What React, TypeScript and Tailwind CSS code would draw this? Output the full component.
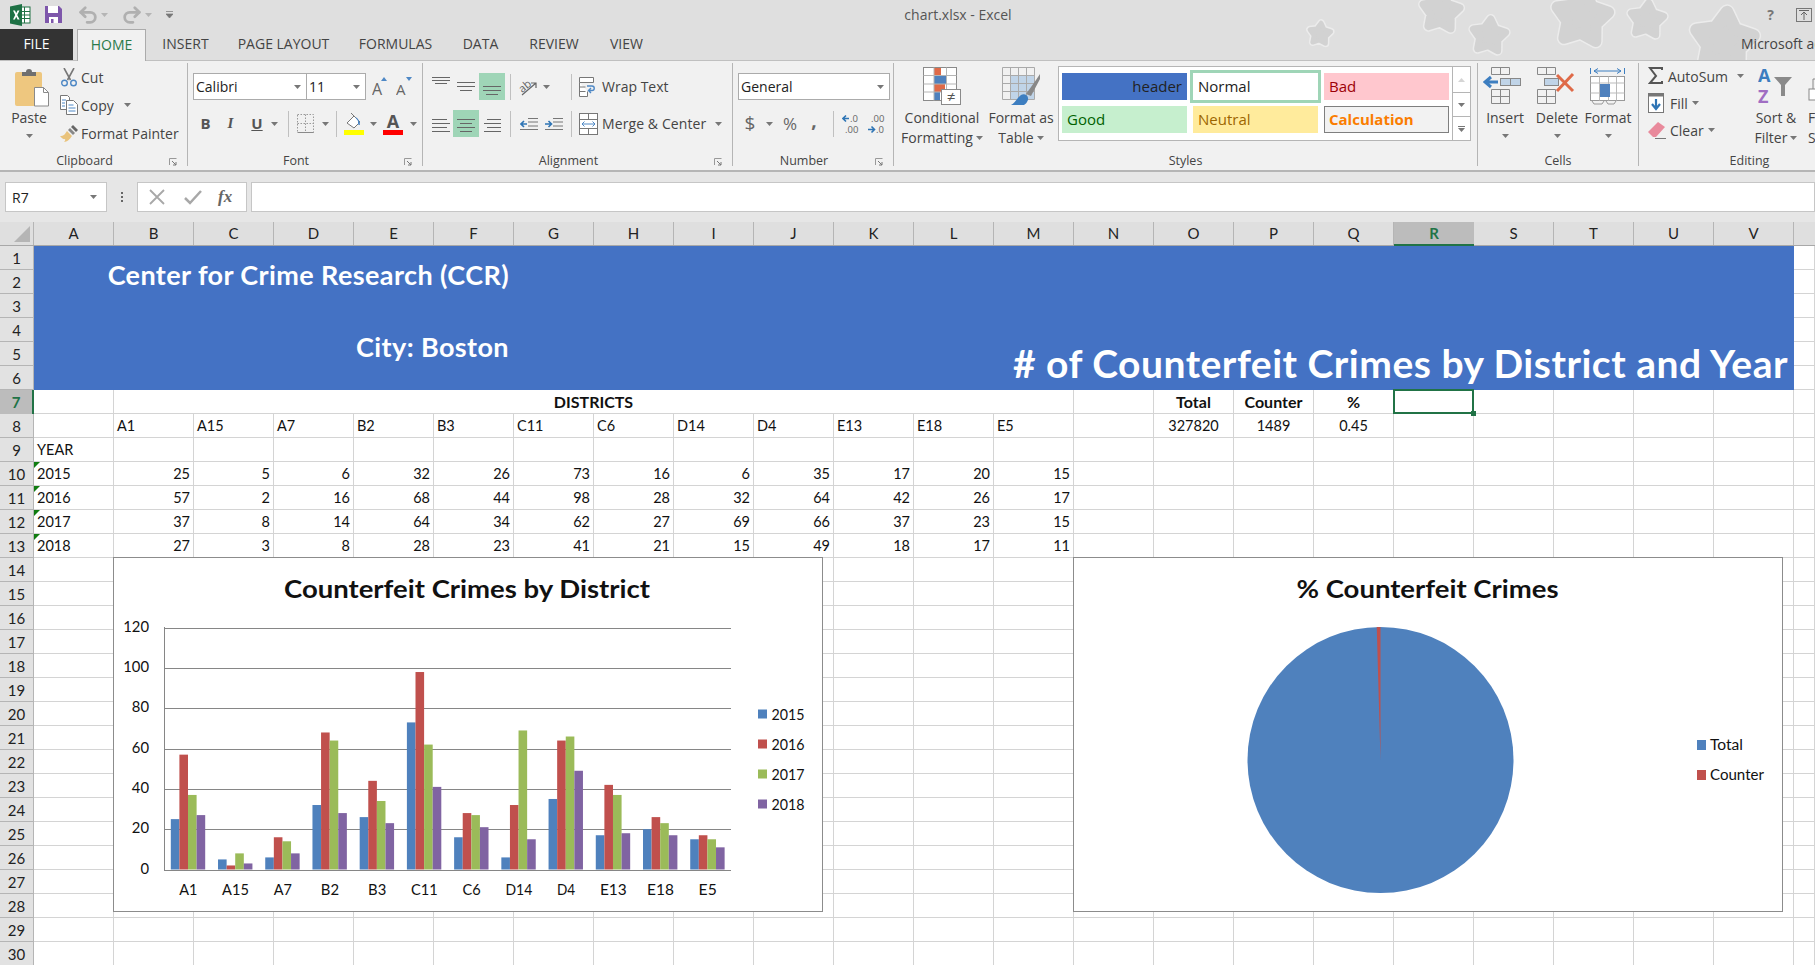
import React from "react";
import { Undo2, Redo2 } from "lucide-react";

const UI = "font-['Open_Sans','Noto_Sans',sans-serif]";
const SHEET = "font-['Lato','Carlito',sans-serif]";
const COLS = "ABCDEFGHIJKLMNOPQRSTUV".split("");
const SERIES = ["#4f81bd", "#c0504d", "#9bbb59", "#8064a2"];
const DISTRICTS = ["A1", "A15", "A7", "B2", "B3", "C11", "C6", "D14", "D4", "E13", "E18", "E5"];
const YEARS: [string, number[]][] = [
  ["2015", [25, 5, 6, 32, 26, 73, 16, 6, 35, 17, 20, 15]],
  ["2016", [57, 2, 16, 68, 44, 98, 28, 32, 64, 42, 26, 17]],
  ["2017", [37, 8, 14, 64, 34, 62, 27, 69, 66, 37, 23, 15]],
  ["2018", [27, 3, 8, 28, 23, 41, 21, 15, 49, 18, 17, 11]],
];

function Caret({ className = "" }: { className?: string }) {
  return (
    <svg width="7" height="4" viewBox="0 0 7 4" className={"shrink-0 " + className}>
      <path d="M0 0h7L3.5 4z" fill="#777" />
    </svg>
  );
}

function Launcher() {
  return (
    <svg width="8" height="8" viewBox="0 0 8 8">
      <path d="M0.5 7V0.5H7.5" fill="none" stroke="#999" />
      <path d="M3 3l4 4M7 4v3H4" fill="none" stroke="#777" />
    </svg>
  );
}

function Group({ w, label, launcher, children }: { w: string; label: string; launcher?: boolean; children: React.ReactNode }) {
  return (
    <div className={"mt-[2px] mb-[4px] shrink-0 border-r border-[#b5b5b5] flex flex-col " + w}>
      <div className="h-[90px] flex">{children}</div>
      <div className="h-[15px] flex leading-[20px] text-[12.5px] text-[#444]">
        <div className="flex-1 text-center">{label}</div>
        {launcher && <div className="w-[18px] pt-[7px]"><Launcher /></div>}
      </div>
    </div>
  );
}

function Big({ w, icon, l1, l2, caretInline }: { w: string; icon: React.ReactNode; l1: string; l2?: string; caretInline?: boolean }) {
  return (
    <div className={"flex flex-col items-center shrink-0 text-[14px] text-[#444] " + w}>
      <div className="h-[45px] pt-[4px] flex justify-center">{icon}</div>
      <div className="leading-[20px] whitespace-nowrap">{l1}</div>
      {l2 ? (
        <div className="leading-[20px] whitespace-nowrap flex items-center gap-[3px]">{l2}{caretInline && <Caret />}</div>
      ) : (
        <div className="h-[20px] flex items-start pt-[6px]"><Caret /></div>
      )}
    </div>
  );
}

function Sep({ className = "" }: { className?: string }) {
  return <div className={"w-px h-[26px] bg-[#c0c0c0] shrink-0 " + className} />;
}

function Lines({ rows, active }: { rows: [number, number, number][]; active?: boolean }) {
  return (
    <div className={"w-[26px] h-[27px] shrink-0 " + (active ? "bg-[#9fd5b7]" : "")}>
      <svg width="26" height="27" viewBox="0 0 26 27">
        {rows.map(([y, a, b], i) => (
          <line key={i} x1={a} x2={b} y1={y + 0.5} y2={y + 0.5} stroke="#666" />
        ))}
      </svg>
    </div>
  );
}

function Combo({ w, text }: { w: string; text: string }) {
  return (
    <div className={"h-[27px] bg-white border border-[#ababab] flex items-center justify-between pl-[2px] pr-[5px] text-[14px] text-[#222] shrink-0 " + w}>
      <span>{text}</span>
      <Caret />
    </div>
  );
}

function ExcelIcon() {
  return (
    <svg width="21" height="22" viewBox="0 0 21 22">
      <rect x="9" y="3" width="11" height="16" fill="#fff" stroke="#207245" />
      <path d="M9 7.5h11M9 11h11M9 14.5h11M14.5 3v16" stroke="#207245" />
      <path d="M0 2.5L12 0v22L0 19.5z" fill="#1e7145" />
      <path d="M3 6.5h2l1.2 2.8L7.5 6.5h2L7.2 11l2.4 4.5h-2L6.2 12.7 4.9 15.5H3L5.2 11z" fill="#fff" />
    </svg>
  );
}

function SaveIcon() {
  return (
    <svg width="17" height="17" viewBox="0 0 17 17">
      <path d="M0 0h14l3 3v14H0z" fill="#7e57ab" />
      <rect x="3" y="0" width="10" height="7" fill="#fff" />
      <rect x="4" y="11" width="9" height="6" fill="#fff" />
      <rect x="6" y="13" width="2.5" height="4" fill="#7e57ab" />
    </svg>
  );
}

function PasteIcon() {
  return (
    <svg width="36" height="40" viewBox="0 0 36 40" className="ml-[8px]">
      <rect x="0" y="5" width="27" height="34" rx="2" fill="#eec77f" />
      <path d="M7 9V5h4a3 3 0 016 0h4v4z" fill="#6f6f6f" />
      <path d="M19.5 20.5h9l5 5v13.5h-14z" fill="#fff" stroke="#8a8a8a" />
      <path d="M28.5 20.5v5h5" fill="none" stroke="#8a8a8a" />
    </svg>
  );
}

function CutIcon() {
  return (
    <svg width="16" height="19" viewBox="0 0 16 19">
      <path d="M3 0l6.5 12M13 0L6.5 12" stroke="#777" strokeWidth="1.6" fill="none" />
      <circle cx="3.5" cy="15" r="2.8" fill="none" stroke="#4e88c5" strokeWidth="1.4" />
      <circle cx="12.5" cy="15" r="2.8" fill="none" stroke="#4e88c5" strokeWidth="1.4" />
    </svg>
  );
}

function CopyIcon() {
  return (
    <svg width="18" height="20" viewBox="0 0 18 20">
      <path d="M.5.5h7l2 2v12H.5z" fill="#fff" stroke="#777" />
      <path d="M6.5 5.5h7l4 4v10h-11z" fill="#fff" stroke="#777" />
      <path d="M2 5h4M2 8h3M2 11h3M8.5 10h5M8.5 13h7M8.5 16h7" stroke="#4e88c5" />
    </svg>
  );
}

function BrushIcon() {
  return (
    <svg width="18" height="17" viewBox="0 0 18 17">
      <path d="M0 11c4 0 5-2 7-5l5 5c-2 3-5 6-8 6 1-1 1.500-2 1-3-1 .5-2.500 0-5-3z" fill="#e9c37c" />
      <path d="M8 5l2-2 5 5-2 2z" fill="#888" />
      <path d="M11 2l2-2 5 5-2 2z" fill="#666" />
    </svg>
  );
}

function GrowA({ dir }: { dir: "up" | "down" }) {
  return (
    <svg width="18" height="20" viewBox="0 0 18 20">
      <text x="0" y="18" fontFamily="Open Sans" fontSize={dir === "up" ? 16 : 15} fill="#666">A</text>
      <path d={dir === "up" ? "M9 4l3-4 3 4z" : "M10 0h6l-3 4z"} fill="#4e88c5" />
    </svg>
  );
}

function BordersIcon() {
  return (
    <svg width="17" height="19" viewBox="0 0 17 19">
      <path d="M.5.5h16v18H.5zM8.500 .5v18M.5 9.500h16" fill="none" stroke="#999" strokeDasharray="1.500 1.500" />
      <path d="M.5 18.500h16" fill="none" stroke="#8a8a8a" />
    </svg>
  );
}

function FillIcon() {
  return (
    <svg width="20" height="24" viewBox="0 0 20 24">
      <path d="M3 11l7-7 6 6-6 6z" fill="#fff" stroke="#777" />
      <path d="M7 1l3 3" stroke="#777" />
      <path d="M11 5c3 1 5 4 5 8l-2-.5V9z" fill="#4e88c5" />
      <rect x="0" y="18" width="20" height="5" fill="#ffff00" />
    </svg>
  );
}

function FontColorIcon() {
  return (
    <svg width="20" height="24" viewBox="0 0 20 24">
      <text x="10" y="16" textAnchor="middle" fontFamily="Open Sans" fontWeight="700" fontSize="18" fill="#555">A</text>
      <rect x="0" y="18" width="20" height="5" fill="#ff0000" />
    </svg>
  );
}

function OrientIcon() {
  return (
    <svg width="20" height="20" viewBox="0 0 20 20">
      <text x="0" y="13" fontFamily="Open Sans" fontSize="11" fill="#666" transform="rotate(-40 6 10)">ab</text>
      <path d="M3 18L17 6M12 6h5v5" fill="none" stroke="#666" strokeWidth="1.2" />
    </svg>
  );
}

function WrapIcon() {
  return (
    <svg width="18" height="20" viewBox="0 0 18 20">
      <path d="M.5.5h14v5H.5zM.5 5.500v14h8v-5" fill="#fff" stroke="#777" />
      <path d="M.5 10h6M.5 14.500h6" stroke="#777" />
      <path d="M8 9h5c3 0 3 4.500 0 4.500H10M12 11l-2.500 2.500L12 16" fill="none" stroke="#4e88c5" strokeWidth="1.4" />
    </svg>
  );
}

function MergeIcon() {
  return (
    <svg width="19" height="22" viewBox="0 0 19 22">
      <rect x=".5" y=".5" width="18" height="21" fill="#fff" stroke="#777" />
      <path d="M.5 6.500h18M.5 15.500h18M9.500.5v6M9.500 15.500v6" stroke="#777" />
      <path d="M3 11h13M5.500 8.500L3 11l2.500 2.500M13.500 8.500L16 11l-2.500 2.500" fill="none" stroke="#4e88c5" />
    </svg>
  );
}

function IndentIcon({ flip }: { flip?: boolean }) {
  return (
    <svg width="18" height="12" viewBox="0 0 18 12">
      <path d="M8 .5h10M8 4h10M8 8h10M0 11.500h18" stroke="#777" />
      {flip ? (
        <path d="M0 6h6M3.500 3L6.500 6l-3 3" fill="none" stroke="#2f75b5" strokeWidth="1.6" />
      ) : (
        <path d="M7 6H1M4 3L1 6l3 3" fill="none" stroke="#2f75b5" strokeWidth="1.6" />
      )}
    </svg>
  );
}

function DecIcon({ inc }: { inc?: boolean }) {
  return (
    <svg width="18" height="20" viewBox="0 0 18 20" fontFamily="Open Sans" fontSize="9.500" fill="#666">
      {inc ? (
        <>
          <text x="3" y="8">.00</text>
          <text x="8" y="19">.0</text>
          <path d="M0 15.500h6M3.500 12.500l3 3-3 3" fill="none" stroke="#2f75b5" strokeWidth="1.6" />
        </>
      ) : (
        <>
          <text x="8" y="8">.0</text>
          <text x="3" y="19">.00</text>
          <path d="M7 4.500H1M4 1.500l-3 3 3 3" fill="none" stroke="#2f75b5" strokeWidth="1.6" />
        </>
      )}
    </svg>
  );
}

function CondIcon() {
  return (
    <svg width="38" height="38" viewBox="0 0 38 38">
      <rect x=".5" y=".5" width="33" height="33" fill="#fff" stroke="#8a8a8a" />
      <rect x="11" y="1" width="7" height="8" fill="#df6a48" />
      <rect x="11" y="9" width="12" height="8" fill="#4f81bd" />
      <rect x="11" y="17" width="11" height="8" fill="#df6a48" />
      <rect x="11" y="25" width="6" height="8" fill="#4f81bd" />
      <path d="M11 .5v33M23.500 .5v33M.5 8.500h33M.5 17h33M.5 25h33" stroke="#b5b5b5" />
      <rect x="18.500" y="22.500" width="19" height="15" fill="#fff" stroke="#8a8a8a" />
      <text x="28" y="35" textAnchor="middle" fontSize="15" fontFamily="Open Sans" fill="#555">≠</text>
    </svg>
  );
}

function TableIcon() {
  return (
    <svg width="38" height="38" viewBox="0 0 38 38">
      <rect x="8" y="8" width="24" height="24" fill="#c0d4e8" />
      <path d="M.5.5h32v32H.5zM8.500.5v32M16.500.5v32M24.500.5v32M.5 8.500h32M.5 16.500h32M.5 24.500h32" fill="none" stroke="#aaa" />
      <path d="M24 27l10-14 4-6v5l-9 17z" fill="#888" />
      <path d="M9 38c4-2 6-7 10-10 3-2 8 0 7 5-1 2-2 4-4 5z" fill="#3d7ec0" />
    </svg>
  );
}

function InsertIcon() {
  return (
    <svg width="44" height="38" viewBox="0 0 44 38">
      <path d="M8.500.5h18v7h-18zM17.500.5v7M8.500 22.500h18v14h-18zM17.500 22.500v14M8.500 29.500h18" fill="none" stroke="#888" />
      <rect x="17.500" y="11.500" width="20" height="7" fill="#c0d4e8" stroke="#888" />
      <path d="M27.500 11.500v7" stroke="#888" />
      <path d="M15 15H2M8 10l-6 5 6 5" fill="none" stroke="#3d7ec0" strokeWidth="3" />
    </svg>
  );
}

function DeleteIcon() {
  return (
    <svg width="40" height="38" viewBox="0 0 40 38">
      <path d="M.5.5h18v7h-18zM9.500.5v7M.5 22.500h18v14h-18zM9.500 22.500v14M.5 29.500h18" fill="none" stroke="#888" />
      <rect x="7.500" y="11.500" width="14" height="7" fill="#c0d4e8" stroke="#888" />
      <path d="M20 8l16 16M36 7L20 24" stroke="#df6a48" strokeWidth="3" />
    </svg>
  );
}

function FormatIcon() {
  return (
    <svg width="36" height="38" viewBox="0 0 36 38">
      <path d="M.5 1v6M34.500 1v6M4 4h27M8 1.500L4 4l4 2.500M27 1.500L31 4l-4 2.500" fill="none" stroke="#3d7ec0" />
      <rect x=".5" y="9.500" width="34" height="24" fill="#fff" stroke="#999" />
      <path d="M9.500 9.500v24M18.500 9.500v24M26.500 9.500v24M.5 16h34M.5 26h34" stroke="#bbb" />
      <rect x="10" y="17" width="10" height="13" fill="#4f81bd" />
      <path d="M2 34l2 3h8l2-3M16 34l2 3h6l2-3" fill="none" stroke="#999" />
    </svg>
  );
}

function SigmaIcon() {
  return (
    <svg width="15" height="18" viewBox="0 0 15 18">
      <path d="M14 3V1H2l6 8-6 7h12v-2" fill="none" stroke="#555" strokeWidth="2" />
    </svg>
  );
}

function FillDownIcon() {
  return (
    <svg width="17" height="20" viewBox="0 0 17 20">
      <rect x=".5" y=".5" width="15" height="19" fill="#fff" stroke="#777" />
      <rect x=".5" y=".5" width="15" height="3" fill="#777" />
      <path d="M8 6v10M4 11l4 5 4-5" fill="none" stroke="#2f75b5" strokeWidth="2.200" />
    </svg>
  );
}

function EraserIcon() {
  return (
    <svg width="18" height="18" viewBox="0 0 18 18">
      <path d="M0 11L10 1l7 5-9 10H5z" fill="#e98a9c" />
      <path d="M7 17.500h11" stroke="#777" />
    </svg>
  );
}

function SortIcon() {
  return (
    <svg width="36" height="38" viewBox="0 0 36 38" fontFamily="Open Sans" fontWeight="700">
      <text x="0" y="15" fontSize="18" fill="#3d7ec0">A</text>
      <text x="0" y="36" fontSize="18" fill="#a06ec2">Z</text>
      <path d="M16 10h18l-7 8v11h-4V18z" fill="#8a8a8a" />
    </svg>
  );
}

function FindFragment() {
  return (
    <svg width="10" height="36" viewBox="0 0 10 36">
      <path d="M5 20V10h5v10" fill="none" stroke="#888" />
      <rect x="1" y="20" width="9" height="11" fill="#fff" stroke="#888" />
    </svg>
  );
}

function starPath(cx: number, cy: number, r: number) {
  const pts: string[] = [];
  for (let i = 0; i < 10; i++) {
    const rr = i % 2 === 0 ? r : r * 0.56;
    const a = -Math.PI / 2 + (i * Math.PI) / 5 + 0.1;
    pts.push(`${cx + rr * Math.cos(a)},${cy + rr * Math.sin(a)}`);
  }
  return pts.join(" ");
}

function Stars() {
  const stars: [number, number, number][] = [
    [1320, 34, 11], [1441, 12, 19], [1489, 36, 17], [1582, 18, 27], [1647, 20, 17], [1724, 42, 30],
  ];
  return (
    <svg className="absolute inset-0" width="1815" height="60" viewBox="0 0 1815 60">
      {stars.map(([x, y, r], i) => (
        <g key={i} strokeLinejoin="round">
          <polygon points={starPath(x, y, r)} fill="#ececec" stroke="#ececec" strokeWidth={r * 0.42 + 3} />
          <polygon points={starPath(x, y, r)} fill="#d2d2d2" stroke="#d2d2d2" strokeWidth={r * 0.42} />
        </g>
      ))}
    </svg>
  );
}

function TitleAndTabs() {
  const tabs: [string, string][] = [
    ["INSERT", "w-[47px]"], ["PAGE LAYOUT", "w-[91px]"], ["FORMULAS", "w-[75px]"],
    ["DATA", "w-[37px]"], ["REVIEW", "w-[52px]"], ["VIEW", "w-[35px]"],
  ];
  return (
    <div className="relative bg-[#dfdfdf] h-[60px] shrink-0">
      <Stars />
      <div className="relative h-[29px] flex items-center">
        <div className="w-[880px] shrink-0 flex items-center pl-[10px]">
          <ExcelIcon />
          <div className="ml-[14px]"><SaveIcon /></div>
          <Undo2 size={22} strokeWidth={3} color="#b0b0b0" className="ml-[15px]" />
          <Caret className="ml-[2px] opacity-40" />
          <Redo2 size={22} strokeWidth={3} color="#b0b0b0" className="ml-[13px]" />
          <Caret className="ml-[2px] opacity-40" />
          <svg width="7" height="7" viewBox="0 0 7 7" className="ml-[14px]">
            <path d="M0 .5h7M0 3h7L3.500 7z" stroke="#777" fill="#777" strokeWidth=".7" />
          </svg>
        </div>
        <div className="w-[156px] text-center text-[14px] text-[#555] pb-[1px] whitespace-nowrap">chart.xlsx - Excel</div>
        <div className="ml-auto flex items-center">
          <span className="text-[14px] font-bold text-[#777] mr-[22px]">?</span>
          <svg width="16" height="14" viewBox="0 0 16 14" className="mr-[3px]">
            <rect x=".5" y=".5" width="15" height="13" fill="none" stroke="#777" />
            <path d="M3 2.500h10M8 12V4M5 7l3-3 3 3" fill="none" stroke="#666" />
          </svg>
        </div>
      </div>
      <div className="relative h-[31px] flex items-stretch text-[14px] text-[#444] whitespace-nowrap">
        <div className="w-[73px] bg-[#333] text-white flex items-center justify-center pb-[2px]">FILE</div>
        <div className="ml-[4px] w-[69px] h-[32px] bg-[#f1f1f1] border border-b-0 border-[#ababab] text-[#2a7a4b] flex items-center justify-center pb-[3px] z-10">HOME</div>
        <div className="ml-[16px] flex items-center gap-[29px] pb-[2px]">
          {tabs.map(([t, w]) => (
            <div key={t} className={"text-center flex justify-center " + w}>{t}</div>
          ))}
        </div>
        <div className="ml-auto w-[74px] overflow-hidden flex items-center pb-[2px]">Microsoft account</div>
      </div>
    </div>
  );
}

function Ribbon() {
  const small = "flex items-center h-[26px] text-[14px] text-[#444] whitespace-nowrap";
  return (
    <div className="h-[112px] shrink-0 bg-[#f1f1f1] border-t border-b-2 border-[#b5b5b5] border-t-[#c0c0c0] flex overflow-hidden">
      <Group w="w-[188px]" label="Clipboard" launcher>
        <Big w="w-[58px]" icon={<PasteIcon />} l1="Paste" />
        <div className="flex flex-col gap-[2px] pt-[1px]">
          <div className={small}><div className="w-[22px] flex justify-center"><CutIcon /></div><span className="ml-[1px]">Cut</span></div>
          <div className={small}><div className="w-[22px] flex justify-center"><CopyIcon /></div><span className="ml-[1px]">Copy</span><Caret className="ml-[10px]" /></div>
          <div className={small}><div className="w-[22px] flex justify-center"><BrushIcon /></div><span className="ml-[1px]">Format Painter</span></div>
        </div>
      </Group>
      <Group w="w-[235px]" label="Font" launcher>
        <div className="flex flex-col pt-[10px] gap-[10px] text-[#555]">
          <div className="flex items-center pl-[5px]">
            <Combo w="w-[114px]" text="Calibri" />
            <Combo w="w-[60px] -ml-px" text="11" />
            <div className="w-[24px] ml-[3px] flex justify-center"><GrowA dir="up" /></div>
            <div className="w-[24px] flex justify-center"><GrowA dir="down" /></div>
          </div>
          <div className="flex items-center h-[27px] pl-[5px]">
            <div className="w-[25px] text-center font-bold text-[15px]">B</div>
            <div className="w-[25px] text-center italic font-semibold text-[15px] font-['Liberation_Serif',serif]">I</div>
            <div className="w-[28px] text-center font-bold text-[15px] underline">U</div>
            <div className="w-[11px]"><Caret /></div>
            <Sep className="ml-[6px]" />
            <div className="w-[24px] ml-[4px] flex justify-center"><BordersIcon /></div>
            <div className="w-[16px] flex justify-center"><Caret /></div>
            <Sep className="ml-[3px]" />
            <div className="ml-[7px]"><FillIcon /></div>
            <div className="w-[18px] flex justify-center"><Caret /></div>
            <div className="ml-[1px]"><FontColorIcon /></div>
            <div className="w-[20px] flex justify-center"><Caret /></div>
          </div>
        </div>
      </Group>
      <Group w="w-[310px]" label="Alignment" launcher>
        <div className="flex flex-col pt-[10px] gap-[10px] pl-[4px]">
          <div className="flex items-center h-[27px]">
            <Lines rows={[[4, 5, 23], [7, 5, 23], [10, 8, 20]]} />
            <Lines rows={[[9, 4, 22], [13, 4, 22], [17, 7, 19]]} />
            <Lines active rows={[[13, 4, 22], [17, 4, 22], [21, 7, 19]]} />
            <Sep className="ml-[5px]" />
            <div className="w-[60px] pl-[8px] flex items-center gap-[4px]"><OrientIcon /><Caret /></div>
            <Sep />
            <div className="ml-[7px]"><WrapIcon /></div>
            <span className="ml-[5px] text-[14px] text-[#444] whitespace-nowrap">Wrap Text</span>
          </div>
          <div className="flex items-center h-[27px]">
            <Lines rows={[[9, 5, 20], [13, 5, 23], [17, 5, 20], [21, 5, 23]]} />
            <Lines active rows={[[9, 4, 22], [13, 7, 19], [17, 4, 22], [21, 7, 19]]} />
            <Lines rows={[[9, 8, 22], [13, 5, 22], [17, 8, 22], [21, 5, 22]]} />
            <Sep className="ml-[5px]" />
            <div className="w-[60px] pl-[9px] flex items-center gap-[7px]"><IndentIcon /><IndentIcon flip /></div>
            <Sep />
            <div className="ml-[7px]"><MergeIcon /></div>
            <span className="ml-[4px] text-[14px] tracking-[0.1px] text-[#444] whitespace-nowrap">Merge &amp; Center</span>
            <Caret className="ml-[9px]" />
          </div>
        </div>
      </Group>
      <Group w="w-[161px]" label="Number" launcher>
        <div className="flex flex-col pt-[10px] gap-[10px] pl-[5px]">
          <Combo w="w-[152px]" text="General" />
          <div className="flex items-center h-[27px] text-[#666]">
            <div className="w-[22px] ml-[1px] text-center text-[19px] leading-none">$</div>
            <div className="w-[16px] flex justify-center"><Caret /></div>
            <div className="w-[26px] text-center text-[17px] leading-none">%</div>
            <div className="w-[24px] text-center text-[19px] leading-none font-bold pb-[6px] pr-[2px]">,</div>
            <Sep className="ml-[6px]" />
            <div className="w-[24px] ml-[5px] flex justify-center"><DecIcon /></div>
            <div className="w-[24px] ml-[2px] flex justify-center"><DecIcon inc /></div>
          </div>
        </div>
      </Group>
      <Group w="w-[584px]" label="Styles">
        <Big w="w-[96px]" icon={<CondIcon />} l1="Conditional" l2="Formatting" caretInline />
        <Big w="w-[62px]" icon={<TableIcon />} l1="Format as" l2="Table" caretInline />
        <div className="ml-[6px] mt-[3px] w-[413px] h-[75px] bg-white border border-[#b5b5b5] flex">
          <div className="grid grid-cols-[125px_125px_125px] grid-rows-[27px_27px] gap-x-[6px] gap-y-[6px] pl-[3px] pt-[6px] text-[15px] flex-1">
            <div className="bg-[#4472c4] text-[#222] text-right pr-[5px] leading-[27px]">header</div>
            <div className="bg-white text-[#222] pl-[5px] leading-[27px] outline-3 outline-[#9fd5b7]">Normal</div>
            <div className="bg-[#ffc7ce] text-[#9c0006] pl-[5px] leading-[27px]">Bad</div>
            <div className="bg-[#c6efce] text-[#006100] pl-[5px] leading-[27px]">Good</div>
            <div className="bg-[#ffeb9c] text-[#9c6500] pl-[5px] leading-[27px]">Neutral</div>
            <div className="bg-[#f2f2f2] border border-[#7f7f7f] text-[#fa7d00] font-bold pl-[4px] leading-[25px]">Calculation</div>
          </div>
          <div className="w-[18px] border-l border-[#b5b5b5] flex flex-col">
            <div className="h-[26px] border-b border-[#b5b5b5] flex items-center justify-center"><Caret className="rotate-180 opacity-30" /></div>
            <div className="h-[24px] border-b border-[#b5b5b5] flex items-center justify-center"><Caret /></div>
            <div className="flex-1 flex flex-col items-center justify-center gap-[1px]"><div className="w-[7px] h-px bg-[#777]" /><Caret /></div>
          </div>
        </div>
      </Group>
      <Group w="w-[161px]" label="Cells">
        <Big w="w-[54px]" icon={<InsertIcon />} l1="Insert" />
        <Big w="w-[50px]" icon={<DeleteIcon />} l1="Delete" />
        <Big w="w-[52px]" icon={<FormatIcon />} l1="Format" />
      </Group>
      <Group w="w-[222px]" label="Editing">
        <div className="ml-[9px] w-[96px] shrink-0 flex flex-col gap-[1px]">
          <div className={small}><div className="w-[22px]"><SigmaIcon /></div>AutoSum<Caret className="ml-[9px]" /></div>
          <div className={small}><div className="w-[22px]"><FillDownIcon /></div>Fill<Caret className="ml-[4px]" /></div>
          <div className={small}><div className="w-[22px]"><EraserIcon /></div>Clear<Caret className="ml-[4px]" /></div>
        </div>
        <Big w="w-[64px]" icon={<SortIcon />} l1="Sort &" l2="Filter" caretInline />
        <div className="flex flex-col text-[14px] text-[#444] whitespace-nowrap">
          <div className="h-[45px] pt-[6px]"><FindFragment /></div>
          <div className="leading-[20px]">Find &amp;</div>
          <div className="leading-[20px]">Select</div>
        </div>
      </Group>
    </div>
  );
}

function FormulaBar() {
  return (
    <div className="h-[50px] shrink-0 bg-[#e6e6e6] pt-[10px] pb-[10px] flex">
      <div className="ml-[5px] w-[102px] bg-white border border-[#c6c6c6] flex items-center justify-between pl-[6px] pr-[9px] text-[14px] text-[#222]">
        <span>R7</span><Caret />
      </div>
      <div className="w-[30px] flex flex-col items-center justify-center gap-[2px]">
        <div className="w-[2px] h-[2px] bg-[#666]" /><div className="w-[2px] h-[2px] bg-[#666]" /><div className="w-[2px] h-[2px] bg-[#666]" />
      </div>
      <div className="w-[110px] bg-white border border-[#c6c6c6] flex items-center text-[#999]">
        <svg width="16" height="16" viewBox="0 0 16 16" className="ml-[11px]"><path d="M1 1l14 14M15 1L1 15" stroke="#a8a8a8" strokeWidth="1.800" /></svg>
        <svg width="18" height="16" viewBox="0 0 18 16" className="ml-[19px]"><path d="M1 9l5 5L17 2" fill="none" stroke="#a8a8a8" strokeWidth="2.500" /></svg>
        <span className="ml-[16px] font-['Liberation_Serif',serif] italic font-bold text-[17px] text-[#666]">fx</span>
      </div>
      <div className="ml-[4px] flex-1 bg-white border border-[#c6c6c6]" />
    </div>
  );
}

function ColumnHeader() {
  return (
    <div className={"h-[24px] shrink-0 flex bg-[#dfdfdf] border-b border-[#a8a8a8] text-[15px] text-[#222] " + SHEET}>
      <div className="w-[34px] shrink-0 border-r border-[#b5b5b5] flex items-end justify-end pr-[3px] pb-[3px]">
        <svg width="16" height="16" viewBox="0 0 16 16"><path d="M16 0v16H0z" fill="#b5b5b5" /></svg>
      </div>
      {COLS.map((c) =>
        c === "R" ? (
          <div key={c} className="w-[80px] shrink-0 bg-[#bcbcbc] border-b-2 border-[#217346] -mb-px flex items-center justify-center font-bold text-[#217346]">{c}</div>
        ) : (
          <div key={c} className="w-[80px] shrink-0 border-r border-[#b5b5b5] flex items-center justify-center">{c}</div>
        )
      )}
    </div>
  );
}

function RowHeaders() {
  return (
    <div className={"w-[34px] shrink-0 flex flex-col bg-[#e2e2e2] text-[15px] text-[#222] " + SHEET}>
      {Array.from({ length: 30 }, (_, i) => i + 1).map((n) =>
        n === 7 ? (
          <div key={n} className="h-[24px] shrink-0 bg-[#bcbcbc] border-r-2 border-[#217346] flex items-center justify-center pt-[1px] font-bold text-[#217346]">{n}</div>
        ) : (
          <div key={n} className="h-[24px] shrink-0 border-r border-b border-[#b5b5b5] flex items-center justify-center pt-[1px]">{n}</div>
        )
      )}
    </div>
  );
}

const cell = "border-r border-b border-[#d4d4d4] flex items-center leading-none whitespace-nowrap pt-[2px] relative";
const boldCell = "border-r border-b border-[#d4d4d4] flex items-center justify-center leading-none whitespace-nowrap pt-[1px] relative font-bold text-[16px]";

function cellContent(row: number, c: number): { text?: string; align?: string; flag?: boolean } {
  if (row === 8) {
    if (c >= 1 && c <= 12) return { text: DISTRICTS[c - 1], align: "justify-start pl-[3px]" };
    if (c === 14) return { text: "327820", align: "justify-center" };
    if (c === 15) return { text: "1489", align: "justify-center" };
    if (c === 16) return { text: "0.45", align: "justify-center" };
  }
  if (row === 9 && c === 0) return { text: "YEAR", align: "justify-start pl-[3px]" };
  if (row >= 10 && row <= 13) {
    const [y, vals] = YEARS[row - 10];
    if (c === 0) return { text: y, align: "justify-start pl-[3px]", flag: true };
    if (c >= 1 && c <= 12) return { text: String(vals[c - 1]), align: "justify-end pr-[3px]" };
  }
  return {};
}

function ColumnChart() {
  const y0 = 869.5;
  const unit = 40.3 / 20;
  const step = 47.22;
  const lbl = (s: string) => s.length * 8.6;
  return (
    <svg width="708" height="353" viewBox="114 558 708 353" fontFamily="Lato, sans-serif" fill="#111">
      <text x="467" y="598" textAnchor="middle" fontWeight="700" fontSize="25" textLength="366" lengthAdjust="spacingAndGlyphs">Counterfeit Crimes by District</text>
      {[0, 20, 40, 60, 80, 100, 120].map((v) => {
        const y = Math.round(y0 - v * unit) + 0.5;
        return (
          <g key={v}>
            <line x1="164" x2="731" y1={y} y2={y} stroke="#868686" />
            <text x="149" y={y + 3.5} textAnchor="end" fontSize="15.500" textLength={lbl(String(v))} lengthAdjust="spacingAndGlyphs">{v}</text>
          </g>
        );
      })}
      <line x1="164.5" x2="164.5" y1="627" y2="870" stroke="#868686" />
      {DISTRICTS.map((d, i) => (
        <g key={d}>
          {YEARS.map(([yr, vals], s) => (
            <rect key={yr} x={170.8 + i * step + s * 8.6} width="8.6" y={y0 - vals[i] * unit} height={vals[i] * unit} fill={SERIES[s]} />
          ))}
          <text x={188.3 + i * step} y="895" textAnchor="middle" fontSize="15.500" textLength={lbl(d) + 1} lengthAdjust="spacingAndGlyphs">{d}</text>
        </g>
      ))}
      {YEARS.map(([yr], s) => (
        <g key={yr}>
          <rect x="758" y={709.5 + s * 30} width="9" height="9" fill={SERIES[s]} />
          <text x="771.5" y={719.5 + s * 30} fontSize="15.500" textLength="33" lengthAdjust="spacingAndGlyphs">{yr}</text>
        </g>
      ))}
    </svg>
  );
}

function PieChart() {
  const cx = 1380.5, cy = 760, r = 133;
  const a = (0.0045 * 2 * Math.PI);
  const sx = cx - r * Math.sin(a), sy = cy - r * Math.cos(a);
  return (
    <svg width="708" height="353" viewBox="1074 558 708 353" fontFamily="Lato, sans-serif" fill="#111">
      <text x="1427.5" y="598" textAnchor="middle" fontWeight="700" fontSize="25" textLength="262" lengthAdjust="spacingAndGlyphs">% Counterfeit Crimes</text>
      <circle cx={cx} cy={cy} r={r} fill="#4f81bd" />
      <path d={`M${cx} ${cy}L${sx} ${sy}A${r} ${r} 0 0 1 ${cx} ${cy - r}Z`} fill="#c0504d" />
      <rect x="1697" y="740" width="9" height="10" fill="#4f81bd" />
      <text x="1710" y="749.500" fontSize="15.500" textLength="33" lengthAdjust="spacingAndGlyphs">Total</text>
      <rect x="1697" y="770" width="9" height="10" fill="#c0504d" />
      <text x="1710" y="779.500" fontSize="15.500" textLength="54" lengthAdjust="spacingAndGlyphs">Counter</text>
    </svg>
  );
}

function Sheet() {
  return (
    <div className="flex-1 flex min-h-0 bg-white">
      <RowHeaders />
      <div className={"relative grid grid-cols-[repeat(22,80px)_21px] grid-rows-[repeat(30,24px)] text-[14.500px] text-[#111] " + SHEET}>
        <div className="col-span-22 row-span-6 bg-[#4472c4] text-white font-bold flex justify-between">
          <div className="w-[475px] flex flex-col items-end pt-[12px] gap-[38px] text-[27px] tracking-[0.4px] leading-[34px] whitespace-nowrap">
            <div>Center for Crime Research (CCR)</div>
            <div>City: Boston</div>
          </div>
          <div className="self-end pr-[6px] pb-[4px] text-[39px] tracking-[0.5px] leading-[46px] whitespace-nowrap">
            # of Counterfeit Crimes by District and Year
          </div>
        </div>
        {[1, 2, 3, 4, 5, 6].map((n) => (
          <div key={n} className={cell} />
        ))}
        <div className={cell} />
        <div className={"col-span-12 " + boldCell}>DISTRICTS</div>
        <div className={cell} />
        <div className={boldCell}>Total</div>
        <div className={boldCell}>Counter</div>
        <div className={boldCell}>%</div>
        <div className={cell}>
          <div className="absolute -left-px -top-px -right-px -bottom-px border-2 border-[#217346] z-10" />
          <div className="absolute -right-[3px] -bottom-[3px] w-[5px] h-[5px] bg-[#217346] z-20" />
        </div>
        {[0, 1, 2, 3, 4].map((n) => (
          <div key={n} className={cell} />
        ))}
        {Array.from({ length: 23 }, (_, i) => i + 8).flatMap((row) =>
          Array.from({ length: 23 }, (_, c) => {
            const info = cellContent(row, c);
            return (
              <div key={row + "-" + c} className={cell + " " + (info.align ?? "")}>
                {info.flag && (
                  <svg width="6" height="6" viewBox="0 0 6 6" className="absolute left-0 top-0"><path d="M0 0h6L0 6z" fill="#107c10" /></svg>
                )}
                {info.text}
              </div>
            );
          })
        )}
        <div className="absolute left-[79px] top-[311px] w-[710px] h-[355px] bg-white border border-[#8c8c8c] z-10">
          <ColumnChart />
        </div>
        <div className="absolute left-[1039px] top-[311px] w-[710px] h-[355px] bg-white border border-[#8c8c8c] z-10">
          <PieChart />
        </div>
      </div>
    </div>
  );
}

export default function App() {
  return (
    <div className={"w-[1815px] h-[965px] overflow-hidden flex flex-col bg-white " + UI}>
      <TitleAndTabs />
      <Ribbon />
      <FormulaBar />
      <ColumnHeader />
      <Sheet />
    </div>
  );
}
